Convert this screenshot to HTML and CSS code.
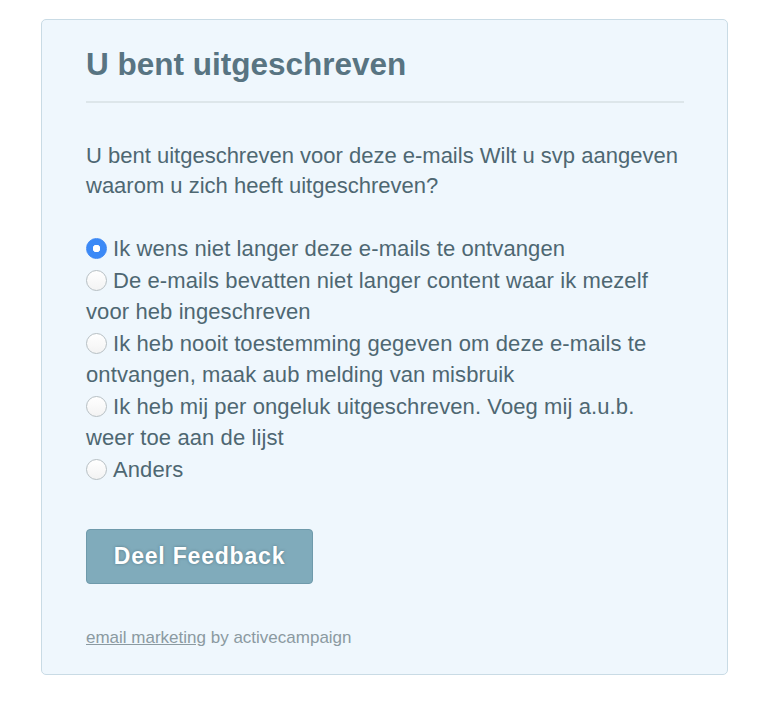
FILE: index.html
```html
<!DOCTYPE html>
<html lang="nl">
<head>
    <meta charset="UTF-8">
    <meta name="viewport" content="width=device-width, initial-scale=1.0">
    <title>U bent uitgeschreven</title>
    <link rel="stylesheet" href="styles.css">
</head>
<body>
    <div class="card">
        <h1>U bent uitgeschreven</h1>

        <p class="intro">U bent uitgeschreven voor deze e-mails Wilt u svp aangeven waarom u zich heeft uitgeschreven?</p>

        <form class="reasons">
            <label class="reason"><input type="radio" name="reason" value="1" checked>Ik wens niet langer deze e-mails te ontvangen</label>
            <label class="reason"><input type="radio" name="reason" value="2">De e-mails bevatten niet langer content waar ik mezelf voor heb ingeschreven</label>
            <label class="reason"><input type="radio" name="reason" value="3">Ik heb nooit toestemming gegeven om deze e-mails te ontvangen, maak aub melding van misbruik</label>
            <label class="reason"><input type="radio" name="reason" value="4">Ik heb mij per ongeluk uitgeschreven. Voeg mij a.u.b. weer toe aan de lijst</label>
            <label class="reason"><input type="radio" name="reason" value="5">Anders</label>

            <button type="button" class="submit">Deel Feedback</button>
        </form>

        <div class="footer"><a href="#">email marketing</a> by activecampaign</div>
    </div>
</body>
</html>
```

FILE: styles.css
```css
body { margin: 0; background-color: #fff; font-family: "Liberation Sans", Arial, sans-serif; color: #4e6772; }
.card { margin: 19px 0 0 41px; width: 598px; padding: 26px 43px 26px 44px; background-color: #eff7fd; border: 1px solid #c9dbe5; border-radius: 5px; }
h1 { margin: 0; padding: 0 0 19px; font-size: 31.5px; line-height: 36px; color: #587482; border-bottom: 2px solid #dde6ea; }
.intro { margin: 38px 0 0; font-size: 22px; line-height: 30px; }
.reasons { margin-top: 32px; }
.reason { display: block; font-size: 22px; line-height: 31.5px; letter-spacing: 0.1px; }
.reason input { -webkit-appearance: none; appearance: none; width: 21px; height: 21px; margin: 0 6px 0 0; vertical-align: -3px; border: 1px solid #b7bfc3; border-radius: 50%; background: linear-gradient(#fff, #f3f3f3); }
.reason input:checked { border-color: #3a86f4; background: radial-gradient(circle, #fff 0 3.5px, #3b89f6 4px); }
.submit { margin-top: 44px; display: block; width: 227px; height: 55px; font-family: inherit; font-size: 23px; font-weight: bold; letter-spacing: 0.8px; color: #fff; text-shadow: 0 0 3px rgba(60, 90, 100, 0.6); background-color: #80abbb; border: 1px solid #6f9aab; border-radius: 4px; }
.footer { margin-top: 44px; font-size: 17px; line-height: 20px; color: #8b9aa1; }
.footer a { color: #8b9aa1; }
```
